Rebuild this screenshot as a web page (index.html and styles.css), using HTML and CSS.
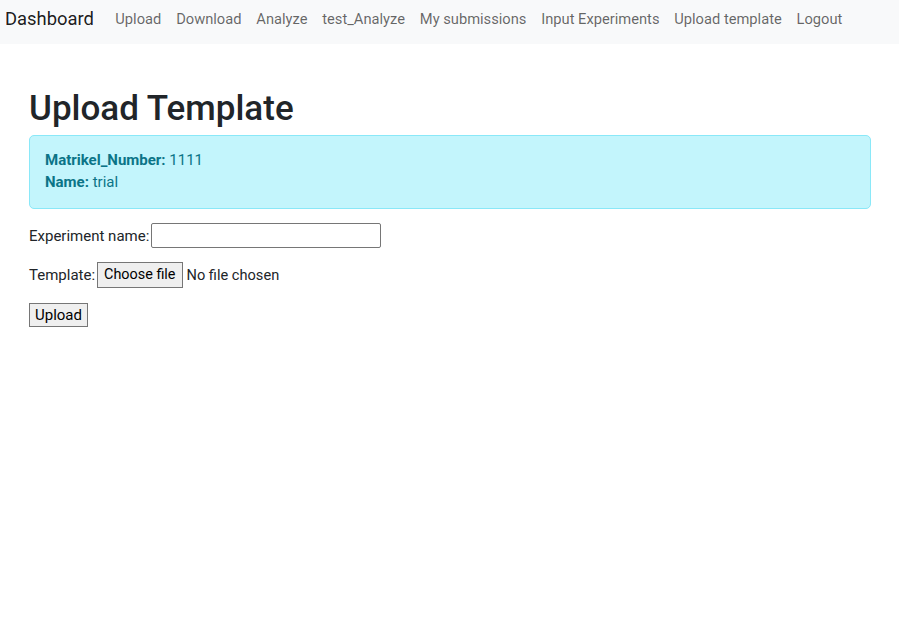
FILE: index.html
```html
<!DOCTYPE html>
<html lang="en">
<head>
<meta charset="utf-8">
<title>Upload Template</title>
<link rel="stylesheet" href="styles.css">
</head>
<body>
<nav class="navbar">
  <a class="brand" href="#">Dashboard</a>
  <ul class="nav">
    <li><a href="#">Upload</a></li>
    <li><a href="#">Download</a></li>
    <li><a href="#">Analyze</a></li>
    <li><a href="#">test_Analyze</a></li>
    <li><a href="#">My submissions</a></li>
    <li><a href="#">Input Experiments</a></li>
    <li><a href="#">Upload template</a></li>
    <li><a href="#">Logout</a></li>
  </ul>
</nav>
<main class="content">
  <h1 class="title">Upload Template</h1>
  <div class="alert">
    <div><strong>Matrikel_Number:</strong> 1111</div>
    <div><strong>Name:</strong> trial</div>
  </div>
  <form class="form">
    <p class="row"><label>Experiment name:</label> <input type="text" class="text-input"></p>
    <p class="row"><label>Template:</label> <span class="file"><span class="btn btn-file">Choose file</span><span class="nofile">No file chosen</span></span></p>
    <p class="row"><button type="button" class="btn">Upload</button></p>
  </form>
</main>
</body>
</html>
```

FILE: styles.css
```css
html, body {
  margin: 0;
  padding: 0;
  background: #fff;
}
body {
  font-family: Roboto, "Liberation Sans", sans-serif;
  font-size: 16px;
  line-height: 1.5;
  color: #212529;
}
.navbar {
  display: flex;
  align-items: center;
  height: 44px;
  box-sizing: border-box;
  padding: 0 0 6px 5px;
  background: #f8f9fa;
}
.brand {
  font-size: 18.4px;
  color: rgba(0,0,0,.9);
  text-decoration: none;
  margin-right: 14px;
}
.nav {
  display: flex;
  list-style: none;
  margin: 0;
  padding: 0;
}
.nav a {
  display: block;
  padding: 0 7.4px;
  color: rgba(0,0,0,.6);
  text-decoration: none;
  font-size: 14.7px;
}
.content {
  padding: 44px 28px 0 29px;
}
.title {
  margin: 0 0 5px;
  font-size: 35px;
  font-weight: 500;
  line-height: 42px;
}
.alert {
  background: #c3f5fc;
  border: 1px solid #8ae8f8;
  border-radius: 5px;
  color: #0b7487;
  padding: 13px 15px 15px;
  font-size: 15px;
  line-height: 22px;
}
.alert strong { font-weight: 700; }
.form { margin-top: 14px; }
.row {
  margin: 0 0 14px;
  display: flex;
  align-items: center;
  font-size: 15px;
  line-height: 26px;
  height: 26px;
}
.row:first-child { height: 25px; }
.row:last-child { height: 24px; margin-top: 15px; }
.row label { margin-right: 2px; }
.text-input {
  box-sizing: border-box;
  width: 230px;
  height: 25px;
  padding: 1px 2px;
  border: 1px solid #767676;
  border-radius: 2px;
  font: inherit;
}
.file { display: flex; align-items: center; }
.btn {
  display: inline-block;
  box-sizing: border-box;
  font: inherit;
  font-size: 15px;
  line-height: 20px;
  height: 24px;
  padding: 1px 5px;
  background: #efefef;
  border: 1px solid #767676;
  border-radius: 0;
  color: #000;
}
.btn-file { height: 26px; line-height: 22px; padding: 1px 6px; font-size: 14.4px; }
.nofile { margin-left: 4px; font-size: 14.6px; }
```
